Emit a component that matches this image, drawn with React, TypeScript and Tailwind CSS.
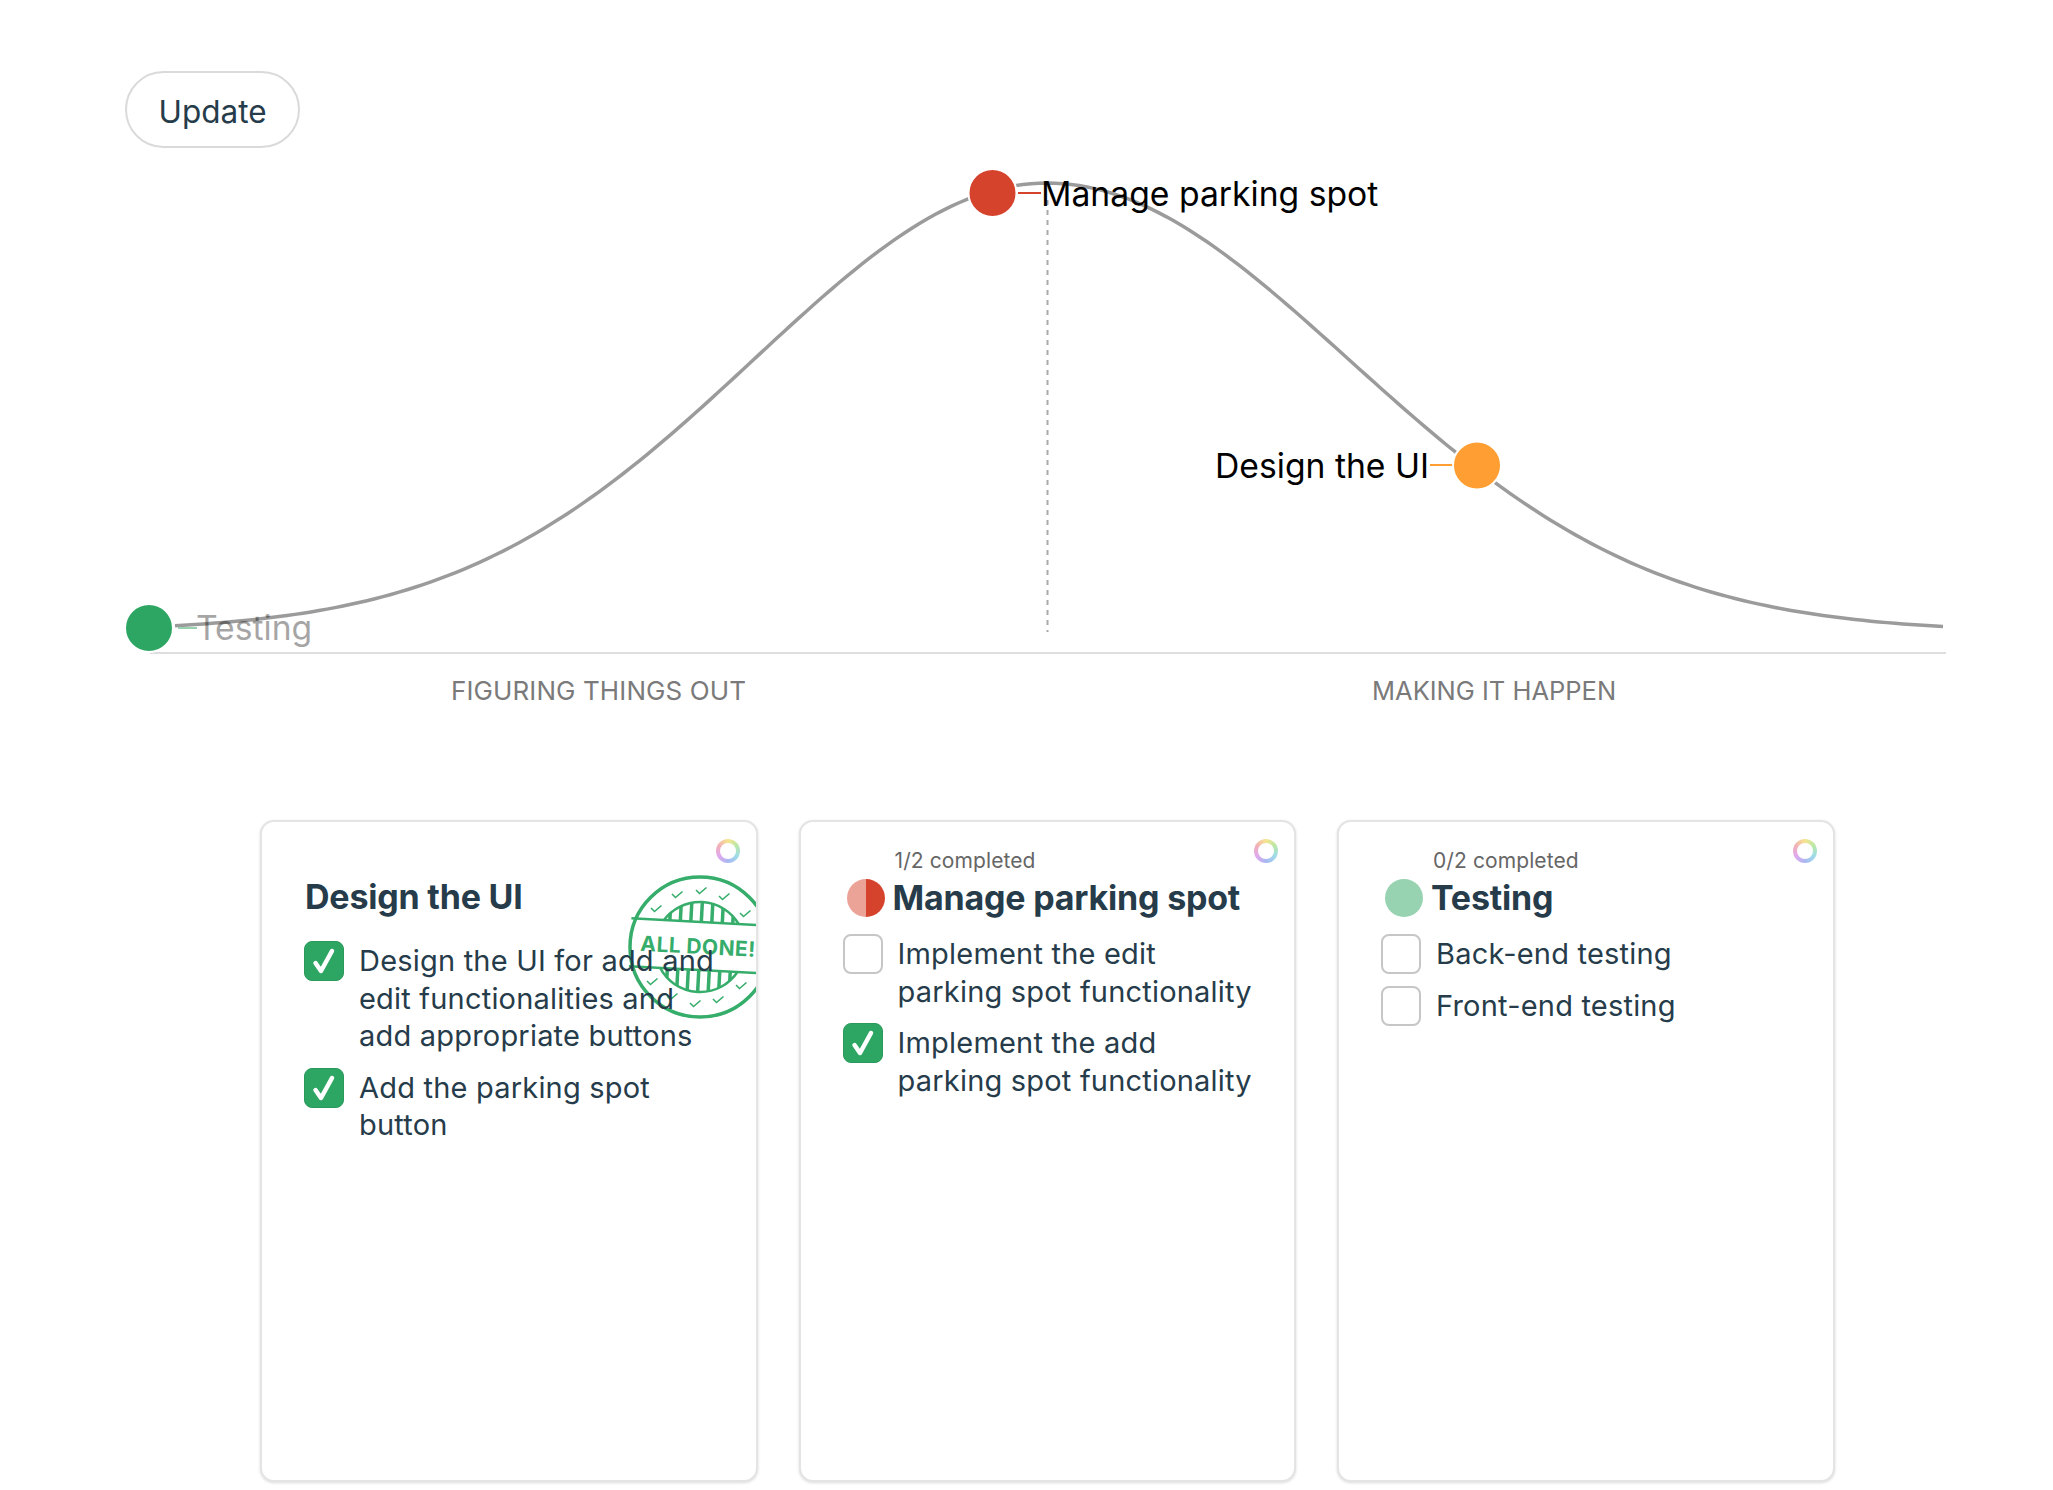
import React from "react";

const curve = () => {
  const pts: string[] = [];
  for (let x = 175; x <= 1944; x += 8) {
    const s = x < 1047 ? 293 : 302;
    const base = x < 1047 ? 631 : 632;
    const y = base - (base - 183) * Math.exp(-((x - 1047) ** 2) / (2 * s ** 2));
    pts.push(`${x},${y.toFixed(2)}`);
  }
  return pts.join(" ");
};

const Check = () => (
  <span className="flex h-10 w-10 shrink-0 items-center justify-center rounded-lg border border-[#2a9a5b] bg-[#2ea663]">
    <svg width="24" height="28" viewBox="0 0 24 28" fill="none">
      <path d="M3.5 16 L9 24 L20 4" stroke="#fff" strokeWidth="4.5" strokeLinecap="round" strokeLinejoin="round" />
    </svg>
  </span>
);

const Empty = () => <span className="h-10 w-10 shrink-0 rounded-lg border-2 border-[#c6c6c6] bg-white" />;

const Ring = () => (
  <span className="absolute right-[16px] top-[17px] flex h-6 w-6 items-center justify-center rounded-full bg-[conic-gradient(#f7e58f,#b9e8a8,#9fdcea,#a9b8f2,#e0a8ee,#f2b0b8,#f7e58f)]">
    <span className="h-4 w-4 rounded-full bg-white" />
  </span>
);

const Stamp = () => {
  const checks = [
    [28, 33], [49, 19], [73, 15], [96, 21], [117, 38],
    [24, 106], [44, 121], [67, 128], [90, 124], [113, 110],
  ];
  const stripes: number[] = [];
  for (let x = 30; x <= 116; x += 10.5) stripes.push(x);
  return (
    <svg className="absolute left-[366px] top-[53px]" width="144" height="144" viewBox="0 0 144 144" fill="none" stroke="#36ad6b">
      <defs>
        <clipPath id="domeTop">
          <path d="M34.6 47 A45 45 0 0 1 109.4 47 Z" />
        </clipPath>
        <clipPath id="domeBottom">
          <path d="M33.3 95 A45 45 0 0 0 110.7 95 Z" />
        </clipPath>
      </defs>
      <circle cx="72" cy="72" r="70" strokeWidth="3.5" />
      <g transform="rotate(3 72 72)">
        <path d="M2 47H142 M2 95H142" strokeWidth="2.5" />
        <path d="M34.6 47 A45 45 0 0 1 109.4 47" strokeWidth="2.5" />
        <path d="M33.3 95 A45 45 0 0 0 110.7 95" strokeWidth="2.5" />
        <g clipPath="url(#domeTop)">
          {stripes.map((x) => (
            <path key={x} d={`M${x} 20V48`} strokeWidth="3.5" />
          ))}
        </g>
        <g clipPath="url(#domeBottom)">
          {stripes.map((x) => (
            <path key={x} d={`M${x} 95V124`} strokeWidth="3.5" />
          ))}
        </g>
        <text x="70" y="79" textAnchor="middle" fill="#36ad6b" stroke="none" fontFamily="Inter, sans-serif" fontWeight="700" fontSize="21" letterSpacing="0.4">
          ALL DONE!
        </text>
      </g>
      {checks.map(([x, y]) => (
        <path key={`${x}-${y}`} d={`M${x - 5} ${y} l3.5 3.5 l7 -6`} strokeWidth="1.6" />
      ))}
    </svg>
  );
};

const Item = ({ done, lines }: { done?: boolean; lines: string[] }) => (
  <div className="flex items-start gap-[15px]">
    {done ? <Check /> : <Empty />}
    <div className="relative z-10 whitespace-nowrap py-px text-[29px] leading-[37.6px] tracking-[0.2px] text-[#263c4a]">
      {lines.map((l) => (
        <div key={l}>{l}</div>
      ))}
    </div>
  </div>
);

const Status = ({ kind }: { kind: "half" | "todo" }) =>
  kind === "half" ? (
    <span className="flex h-[38px] w-[38px] shrink-0 overflow-hidden rounded-full">
      <span className="h-full w-1/2 bg-[#eba398]" />
      <span className="h-full w-1/2 bg-[#d5432d]" />
    </span>
  ) : (
    <span className="h-[38px] w-[38px] shrink-0 rounded-full bg-[#97d3b1]" />
  );

const Card = ({ children }: { children: React.ReactNode }) => (
  <div className="relative h-[662px] w-[497.5px] overflow-hidden rounded-[14px] border-2 border-[#e4e4e4] bg-white pl-[42px] shadow-[0_1px_3px_rgba(0,0,0,0.14)]">
    <Ring />
    {children}
  </div>
);

const Title = ({ children }: { children: string }) => (
  <div className="whitespace-nowrap text-[34px] font-bold leading-[44px] tracking-[-0.2px] text-[#263c4a]">{children}</div>
);

const Count = ({ children }: { children: string }) => (
  <div className="ml-[52px] h-[28px] whitespace-nowrap text-[21px] leading-[26px] tracking-[0.1px] text-[#666]">{children}</div>
);

export default function App() {
  return (
    <div className="min-h-[1490px] bg-white pt-[71px] font-['Inter',sans-serif]">
      <button className="ml-[125px] block h-[77px] w-[175px] rounded-full border-2 border-[#dadada] bg-white pt-[4px] text-center text-[31.5px] text-[#263c4a]">
        Update
      </button>

      <div className="relative h-[674px]">
        <svg className="absolute left-0 top-[-148px]" width="2053" height="720" viewBox="0 0 2053 720" fill="none">
          <polyline points={curve()} stroke="#9b9b9b" strokeWidth="3.5" />
          <path d="M1047.5 200V632" stroke="#aaaaaa" strokeWidth="2" strokeDasharray="5 5" />
          <path d="M150 653H1946" stroke="#dedede" strokeWidth="2" />
          <path d="M178 628H197" stroke="#97d3b1" strokeWidth="2" />
          <path d="M1018 193H1041" stroke="#d5432d" strokeWidth="2" />
          <path d="M1430 465H1453" stroke="#ff9f33" strokeWidth="2" />
          <circle cx="149" cy="628" r="24" fill="#2ea663" stroke="#fff" strokeWidth="2" />
          <circle cx="992.5" cy="193" r="24" fill="#d5432d" stroke="#fff" strokeWidth="2" />
          <circle cx="1477" cy="465.5" r="24" fill="#ff9f33" stroke="#fff" strokeWidth="2" />
        </svg>
        <span className="absolute left-[1041px] top-[23px] whitespace-nowrap text-[33.7px] leading-[46px] text-black">Manage parking spot</span>
        <span className="absolute left-[1215px] top-[295px] whitespace-nowrap text-[33.7px] leading-[46px] text-black">Design the UI</span>
        <span className="absolute left-[196px] top-[457px] whitespace-nowrap text-[33.7px] leading-[46px] text-black opacity-35">Testing</span>
        <span className="absolute left-[451px] top-[527px] whitespace-nowrap text-[26px] leading-[32px] tracking-[0.1px] text-[#7a7a7a]">FIGURING THINGS OUT</span>
        <span className="absolute left-[1372px] top-[527px] whitespace-nowrap text-[25.5px] leading-[32px] text-[#7a7a7a]">MAKING IT HAPPEN</span>
      </div>

      <div className="mt-[-2px] flex gap-[41px] pl-[260px]">
        <Card>
          <Stamp />
          <div className="pt-[53px]">
            <div className="ml-[1px]">
              <Title>Design the UI</Title>
            </div>
            <div className="mt-[22px] flex flex-col gap-3">
              <Item done lines={["Design the UI for add and", "edit functionalities and", "add appropriate buttons"]} />
              <Item done lines={["Add the parking spot", "button"]} />
            </div>
          </div>
        </Card>
        <Card>
          <div className="pt-[26px]">
            <Count>1/2 completed</Count>
            <div className="ml-[4px] flex items-center gap-[8px]">
              <Status kind="half" />
              <Title>Manage parking spot</Title>
            </div>
            <div className="mt-[14px] flex flex-col gap-3">
              <Item lines={["Implement the edit", "parking spot functionality"]} />
              <Item done lines={["Implement the add", "parking spot functionality"]} />
            </div>
          </div>
        </Card>
        <Card>
          <div className="pt-[26px]">
            <Count>0/2 completed</Count>
            <div className="ml-[4px] flex items-center gap-[8px]">
              <Status kind="todo" />
              <Title>Testing</Title>
            </div>
            <div className="mt-[14px] flex flex-col gap-3">
              <Item lines={["Back-end testing"]} />
              <Item lines={["Front-end testing"]} />
            </div>
          </div>
        </Card>
      </div>
    </div>
  );
}
